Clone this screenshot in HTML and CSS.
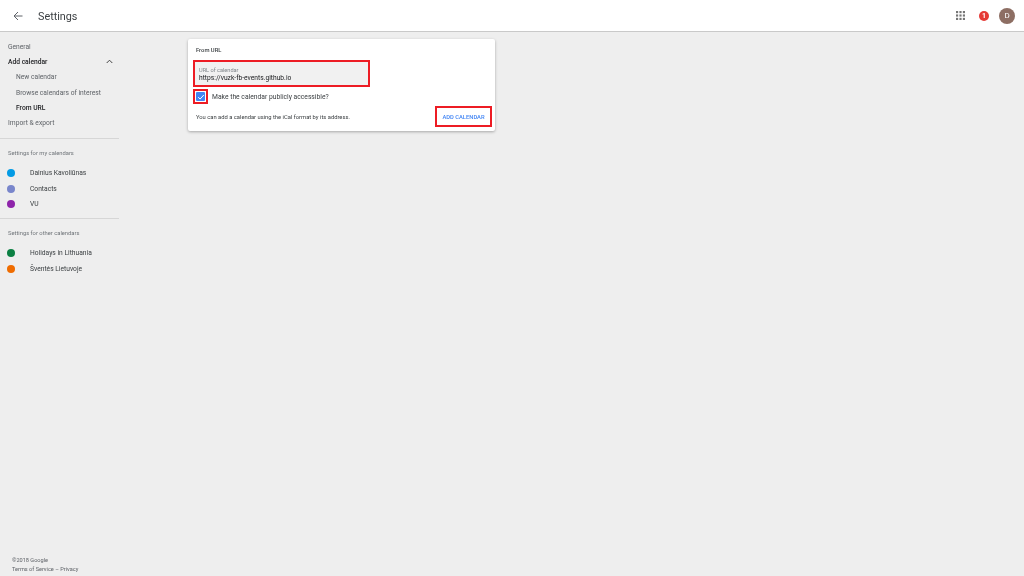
FILE: index.html
```html
<!DOCTYPE html>
<html lang="en">
<head>
    <meta charset="UTF-8">
    <meta name="viewport" content="width=device-width, initial-scale=1.0">
    <title>Settings</title>
    <link rel="stylesheet" href="styles.css">
</head>
<body>
    <header class="topbar">
        <svg class="back" width="10" height="10" viewBox="0 0 10 10"><path d="M9.5 5H1.2M5 1L1 5l4 4" fill="none" stroke="#5f6368" stroke-width="1"/></svg>
        <h1>Settings</h1>
        <div class="top-right">
            <svg class="apps" width="9" height="9" viewBox="0 0 10 10" fill="#757575">
                <rect x="0" y="0" width="2.4" height="2.4"/><rect x="3.8" y="0" width="2.4" height="2.4"/><rect x="7.6" y="0" width="2.4" height="2.4"/>
                <rect x="0" y="3.8" width="2.4" height="2.4"/><rect x="3.8" y="3.8" width="2.4" height="2.4"/><rect x="7.6" y="3.8" width="2.4" height="2.4"/>
                <rect x="0" y="7.6" width="2.4" height="2.4"/><rect x="3.8" y="7.6" width="2.4" height="2.4"/><rect x="7.6" y="7.6" width="2.4" height="2.4"/>
            </svg>
            <span class="badge">1</span>
            <span class="avatar">D</span>
        </div>
    </header>

    <div class="main">
        <nav class="sidebar">
            <div class="nav-top">
                <a class="nav-item">General</a>
                <a class="nav-item nav-open">Add calendar
                    <svg width="7" height="5" viewBox="0 0 7 5"><path d="M.7 4L3.5 1.2 6.3 4" fill="none" stroke="#444" stroke-width="1"/></svg>
                </a>
                <a class="nav-item sub">New calendar</a>
                <a class="nav-item sub">Browse calendars of interest</a>
                <a class="nav-item sub current">From URL</a>
                <a class="nav-item">Import &amp; export</a>
            </div>
            <div class="nav-group">
                <p class="group-title">Settings for my calendars</p>
                <a class="cal"><span class="dot blue"></span>Dainius Kavoliūnas</a>
                <a class="cal"><span class="dot indigo"></span>Contacts</a>
                <a class="cal"><span class="dot purple"></span>VU</a>
            </div>
            <div class="nav-group">
                <p class="group-title">Settings for other calendars</p>
                <a class="cal"><span class="dot green"></span>Holidays in Lithuania</a>
                <a class="cal"><span class="dot orange"></span>Šventės Lietuvoje</a>
            </div>
            <footer class="legal">
                <div>©2018 Google</div>
                <div>Terms of Service – Privacy</div>
            </footer>
        </nav>

        <section class="card">
            <h2>From URL</h2>
            <div class="field marked">
                <label>URL of calendar</label>
                <div class="value">https://vuzk-fb-events.github.io</div>
            </div>
            <div class="check-row">
                <span class="check-mark marked">
                    <span class="checkbox">
                        <svg width="8" height="8" viewBox="0 0 8 8"><path d="M1.2 4.2L3.1 6 6.8 2" fill="none" stroke="#fff" stroke-width="1"/></svg>
                    </span>
                </span>
                <span>Make the calendar publicly accessible?</span>
            </div>
            <div class="card-foot">
                <p>You can add a calendar using the iCal format by its address.</p>
                <button class="add marked">ADD CALENDAR</button>
            </div>
        </section>
    </div>
</body>
</html>
```

FILE: styles.css
```css
html, body {
    height: 100%;
}
body {
    margin: 0;
    background-color: #eeeeee;
    font-family: Roboto, "Liberation Sans", sans-serif;
    color: #3c4043;
    display: flex;
    flex-direction: column;
    overflow: hidden;
}
.topbar {
    height: 30px;
    flex: none;
    display: flex;
    align-items: center;
    background-color: #fff;
    border-bottom: 1px solid #c9c9c9;
    padding: 1px 9px 0 13px;
    will-change: transform;
}
.back {
    margin-right: 15px;
    margin-top: -1px;
}
.topbar h1 {
    margin: 0;
    font-size: 10.8px;
    font-weight: 400;
    color: #3c4043;
    flex: 1;
}
.top-right {
    display: flex;
    align-items: center;
    margin-top: -1px;
}
.apps {
    margin-right: 14px;
}
.badge {
    width: 10px;
    height: 10px;
    border-radius: 50%;
    background-color: #e53935;
    color: #fff;
    font-size: 7px;
    font-weight: 700;
    display: flex;
    align-items: center;
    justify-content: center;
    margin-right: 10px;
}
.avatar {
    width: 16px;
    height: 16px;
    border-radius: 50%;
    background-color: #8d6e63;
    color: #fff;
    font-size: 8px;
    display: flex;
    align-items: center;
    justify-content: center;
}

.main {
    flex: 1;
    display: flex;
    min-height: 0;
}
.sidebar {
    width: 119px;
    flex: none;
    display: flex;
    flex-direction: column;
    font-size: 6.7px;
    will-change: transform;
}
.nav-top {
    padding-top: 7px;
    padding-bottom: 7px;
}
.nav-item {
    height: 15.3px;
    display: flex;
    align-items: center;
    justify-content: space-between;
    padding: 0 6px 0 8px;
    color: #5f6368;
}
.nav-open {
    color: #202124;
    font-weight: 500;
}
.sub {
    padding-left: 16px;
}
.current {
    color: #202124;
    font-weight: 500;
}
.nav-group {
    border-top: 1px solid #d6d6d6;
    padding: 9px 0 6px;
}
.group-title {
    margin: 0 0 7px;
    padding-left: 8px;
    font-size: 5.8px;
    line-height: 11px;
    color: #70757a;
}
.cal {
    height: 15.3px;
    display: flex;
    align-items: center;
    padding-left: 7px;
    color: #3c4043;
}
.dot {
    width: 8px;
    height: 8px;
    border-radius: 50%;
    margin-right: 15px;
}
.blue { background-color: #039be5; }
.indigo { background-color: #7986cb; }
.purple { background-color: #8e24aa; }
.green { background-color: #0b8043; }
.orange { background-color: #ef6c00; }
.legal {
    margin-top: auto;
    padding: 0 0 2px 12px;
    font-size: 5.6px;
    line-height: 9px;
    color: #5f6368;
}

.card {
    width: 307px;
    height: 92px;
    margin: 7px 0 0 69px;
    background-color: #fff;
    border-radius: 2px;
    box-shadow: 0 1px 3px rgba(0, 0, 0, 0.3);
    padding: 7px 3px 0 8px;
    box-sizing: border-box;
    display: flex;
    flex-direction: column;
    will-change: transform;
}
.card h2 {
    margin: 0 0 6px;
    font-size: 5.8px;
    line-height: 8px;
    font-weight: 500;
    color: #3c4043;
}
.marked {
    border: 2px solid #ed1c24;
}
.field {
    width: 177px;
    height: 27px;
    box-sizing: border-box;
    background-color: #f1f1f1;
    margin-left: -3px;
    padding: 4px 0 0 4px;
}
.field label {
    display: block;
    font-size: 5.6px;
    line-height: 8px;
    color: #80868b;
}
.value {
    font-size: 6.7px;
    line-height: 9px;
    color: #202124;
}
.check-row {
    display: flex;
    align-items: center;
    font-size: 6.75px;
    color: #3c4043;
    margin: 2px 0 0 -3px;
}
.check-mark {
    width: 15px;
    height: 15px;
    box-sizing: border-box;
    display: flex;
    align-items: center;
    justify-content: center;
    margin-right: 4px;
}
.checkbox {
    width: 9px;
    height: 9px;
    background-color: #4285f4;
    border-radius: 1px;
    display: flex;
    align-items: center;
    justify-content: center;
}
.card-foot {
    display: flex;
    align-items: center;
    justify-content: space-between;
    margin-top: 2px;
}
.card-foot p {
    margin: 0;
    font-size: 5.8px;
    color: #3c4043;
}
.add {
    width: 57px;
    height: 21px;
    background-color: #fff;
    color: #4285f4;
    font-family: inherit;
    font-size: 5.8px;
    font-weight: 500;
    padding: 0;
    cursor: pointer;
}
```
